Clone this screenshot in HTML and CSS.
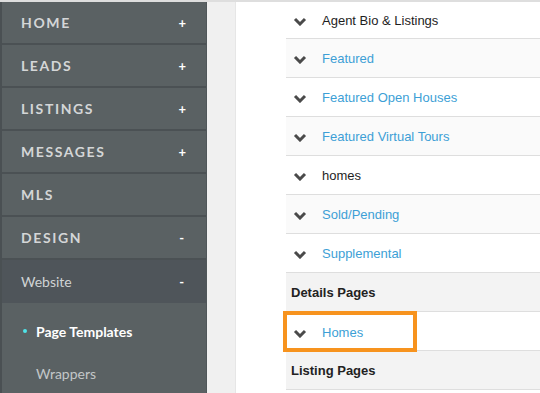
FILE: index.html
```html
<!DOCTYPE html>
<html>
<head>
<meta charset="utf-8">
<link rel="stylesheet" href="styles.css">
</head>
<body>
<div class="page">
  <nav class="sidebar">
    <div class="nav-item"><span>HOME</span><span class="sign">+</span></div>
    <div class="nav-item"><span>LEADS</span><span class="sign">+</span></div>
    <div class="nav-item"><span>LISTINGS</span><span class="sign">+</span></div>
    <div class="nav-item"><span>MESSAGES</span><span class="sign">+</span></div>
    <div class="nav-item"><span>MLS</span></div>
    <div class="nav-item"><span>DESIGN</span><span class="sign minus">-</span></div>
    <div class="sub-head"><span>Website</span><span class="sign minus">-</span></div>
    <div class="sub-list">
      <div class="sub-item active"><span class="dot"></span>Page Templates</div>
      <div class="sub-item">Wrappers</div>
    </div>
  </nav>
  <div class="gutter"></div>
  <main class="content">
    <ul class="tpl-list">
      <li class="row first"><svg class="chev" viewBox="0 0 14 9"><polyline points="2,2 7,7 12,2"/></svg><span class="dark">Agent Bio &amp; Listings</span></li>
      <li class="row alt"><svg class="chev" viewBox="0 0 14 9"><polyline points="2,2 7,7 12,2"/></svg><span class="link">Featured</span></li>
      <li class="row"><svg class="chev" viewBox="0 0 14 9"><polyline points="2,2 7,7 12,2"/></svg><span class="link">Featured Open Houses</span></li>
      <li class="row alt"><svg class="chev" viewBox="0 0 14 9"><polyline points="2,2 7,7 12,2"/></svg><span class="link">Featured Virtual Tours</span></li>
      <li class="row"><svg class="chev" viewBox="0 0 14 9"><polyline points="2,2 7,7 12,2"/></svg><span class="dark">homes</span></li>
      <li class="row alt"><svg class="chev" viewBox="0 0 14 9"><polyline points="2,2 7,7 12,2"/></svg><span class="link">Sold/Pending</span></li>
      <li class="row"><svg class="chev" viewBox="0 0 14 9"><polyline points="2,2 7,7 12,2"/></svg><span class="link">Supplemental</span></li>
      <li class="row section">Details Pages</li>
      <li class="row highlight"><div class="hl-box"><svg class="chev" viewBox="0 0 14 9"><polyline points="2,2 7,7 12,2"/></svg><span class="link">Homes</span></div></li>
      <li class="row section">Listing Pages</li>
    </ul>
  </main>
</div>
</body>
</html>
```

FILE: styles.css
```css
* { box-sizing: border-box; }
html, body { margin: 0; padding: 0; }
body {
  width: 540px;
  height: 393px;
  overflow: hidden;
  background: #ffffff;
}
.page {
  display: flex;
  height: 393px;
  border-top: 2px solid #dedede;
}
.sidebar {
  width: 207px;
  flex: 0 0 207px;
  background: #5a6163;
  border-left: 2px solid #4a5053;
  border-right: 1px solid #50575a;
  font-family: Lato, "Open Sans", sans-serif;
}
.nav-item {
  height: 43px;
  border-bottom: 2px solid #4b5154;
  display: flex;
  align-items: center;
  justify-content: space-between;
  padding: 0 20px 0 19px;
  color: #d4d6d7;
  font-weight: 700;
  font-size: 14px;
  letter-spacing: 1.6px;
}
.sign {
  color: #ffffff;
  font-size: 13px;
  font-weight: 700;
  letter-spacing: 0;
}
.minus { padding-right: 2px; }
.sub-head {
  height: 43px;
  background: #4f555a;
  display: flex;
  align-items: center;
  justify-content: space-between;
  padding: 0 20px 0 19px;
  color: #d0d3d4;
  font-size: 14px;
}
.sub-list { padding-top: 7px; }
.sub-item {
  height: 42px;
  display: flex;
  align-items: center;
  padding-left: 34px;
  color: #c3c7c8;
  font-size: 14px;
  position: relative;
}
.sub-item.active { color: #ffffff; font-weight: 700; }
.dot {
  position: absolute;
  left: 21px;
  top: 19px;
  width: 4px;
  height: 4px;
  border-radius: 50%;
  background: #4fe3e8;
}
.gutter {
  width: 30px;
  flex: 0 0 29px;
  background: #f0f0f0;
  border-right: 1px solid #e6e6e6;
}
.content {
  flex: 1;
  background: #ffffff;
  padding-left: 50px;
}
.tpl-list {
  list-style: none;
  margin: 0;
  padding: 0;
  font-family: "Liberation Sans", Arial, sans-serif;
  font-size: 13px;
}
.row {
  height: 39px;
  border-bottom: 1px solid #dedede;
  display: flex;
  align-items: center;
  padding-left: 7px;
  padding-top: 1px;
  background: #ffffff;
}
.row.first { height: 37px; }
.row.alt { background: #fafafa; }
.chev {
  width: 14px;
  height: 9px;
  margin-right: 15px;
  margin-top: 2px;
  flex: 0 0 14px;
}
.chev polyline {
  fill: none;
  stroke: #4a4a4a;
  stroke-width: 3;
}
.dark { color: #1e1e1e; }
.link { color: #3d9fd6; }
.section {
  background: #f3f3f3;
  font-weight: 700;
  color: #222222;
  padding-left: 5px;
}
.row.highlight {
  padding-left: 0;
  position: relative;
}
.hl-box {
  position: absolute;
  left: -3px;
  top: -1px;
  width: 134px;
  height: 41px;
  border: 4px solid #f7931e;
  display: flex;
  align-items: center;
  padding-left: 6px;
  padding-top: 2px;
  background: #ffffff;
}
```
